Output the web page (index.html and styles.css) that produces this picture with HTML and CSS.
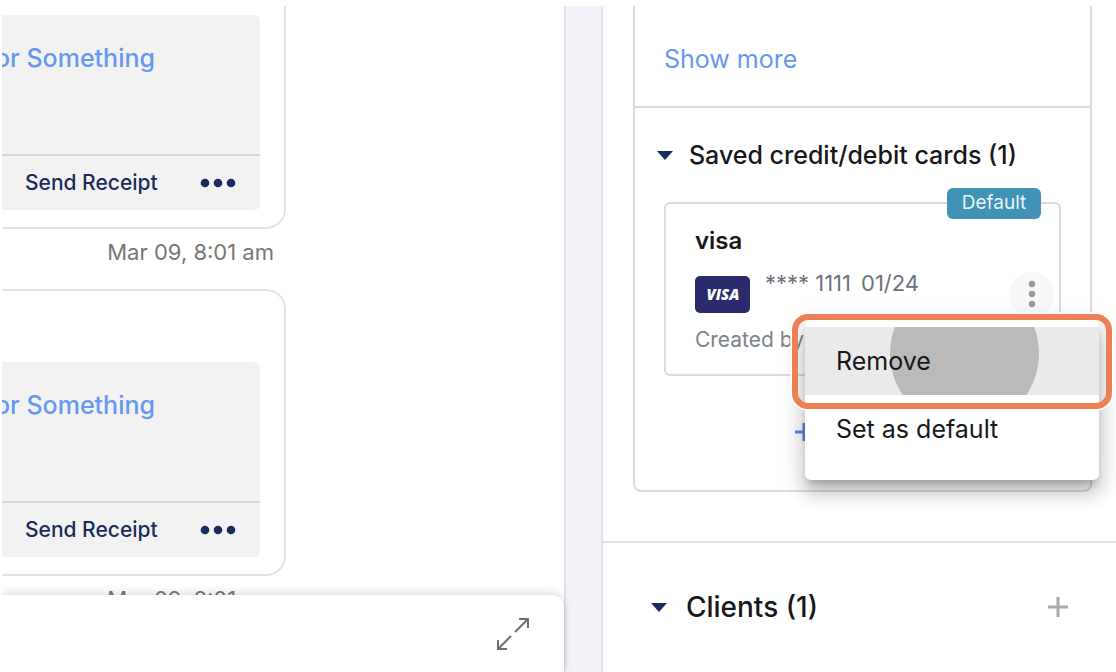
FILE: index.html
```html
<!DOCTYPE html>
<html lang="en">
<head>
  <meta charset="UTF-8" />
  <meta name="viewport" content="width=device-width, initial-scale=1.0" />
  <title>Client payments</title>
  <link rel="stylesheet" href="styles.css">
</head>
<body>

  <div class="page">
    <main class="conversation">
      <div class="messages">
        <article class="message">
          <div class="bubble">
            <div class="invoice">
              <div class="invoice-body">
                <a class="invoice-title" href="#">or Something</a>
              </div>
              <div class="invoice-footer">
                <button class="receipt">Send Receipt</button>
                <button class="dots" aria-label="More actions">
                  <svg width="36" height="10" viewBox="0 0 36 10"><circle cx="5" cy="5" r="4.3"/><circle cx="18" cy="5" r="4.3"/><circle cx="31" cy="5" r="4.3"/></svg>
                </button>
              </div>
            </div>
          </div>
          <time class="stamp">Mar 09, 8:01 am</time>
        </article>

        <article class="message">
          <div class="bubble">
            <div class="invoice">
              <div class="invoice-body">
                <a class="invoice-title" href="#">or Something</a>
              </div>
              <div class="invoice-footer">
                <button class="receipt">Send Receipt</button>
                <button class="dots" aria-label="More actions">
                  <svg width="36" height="10" viewBox="0 0 36 10"><circle cx="5" cy="5" r="4.3"/><circle cx="18" cy="5" r="4.3"/><circle cx="31" cy="5" r="4.3"/></svg>
                </button>
              </div>
            </div>
          </div>
          <time class="stamp">Mar 09, 8:01 am</time>
        </article>
      </div>

      <div class="composer">
        <button class="expand" aria-label="Expand">
          <svg width="34" height="34" viewBox="0 0 34 34"><path d="M19 15L32 2M23 2h9v9M15 19L2 32M2 23v9h9"/></svg>
        </button>
      </div>
    </main>

    <aside class="sidebar">
      <section class="details">
        <div class="panel">
          <div class="panel-more">
            <a class="show-more" href="#">Show more</a>
          </div>
          <div class="panel-cards">
            <h3 class="heading"><span class="caret"></span>Saved credit/debit cards (1)</h3>

            <div class="card">
              <span class="badge">Default</span>
              <h4 class="card-brand">visa</h4>
              <div class="card-row">
                <svg class="visa" width="55" height="37" viewBox="0 0 55 37" role="img" aria-label="Visa">
                  <rect width="55" height="37" rx="5"/>
                  <text x="28" y="24" text-anchor="middle">VISA</text>
                </svg>
                <span class="card-number">**** 1111</span>
                <span class="card-date">01/24</span>
                <button class="kebab" aria-label="Card options">
                  <svg width="8" height="28" viewBox="0 0 8 28"><circle cx="4" cy="4" r="3.2"/><circle cx="4" cy="14" r="3.2"/><circle cx="4" cy="24" r="3.2"/></svg>
                </button>
              </div>
              <p class="card-author">Created by</p>

              <div class="menu">
                <button class="menu-item active"><span class="ripple"></span><span class="menu-label">Remove</span></button>
                <button class="menu-item"><span class="menu-label">Set as default</span></button>
                <div class="highlight"></div>
              </div>
            </div>

            <button class="add-card" aria-label="Add card">
              <svg width="20" height="20" viewBox="0 0 20 20"><path d="M0 10h19M9 1v18"/></svg>
            </button>
          </div>
        </div>
      </section>

      <section class="clients">
        <h2 class="heading heading-large"><span class="caret"></span>Clients (1)</h2>
        <button class="add-client" aria-label="Add client">
          <svg width="22" height="22" viewBox="0 0 22 22"><path d="M1 11h20M11 1v20"/></svg>
        </button>
      </section>
    </aside>
  </div>

</body>
</html>
```

FILE: styles.css
```css
* {
  box-sizing: border-box;
}

body {
  margin: 0;
  background-color: #fff;
  color: #17181b;
  font-family: Inter, sans-serif;
  font-size: 25px;
  line-height: 30px;
}

h2, h3, h4, p {
  margin: 0;
}

a {
  color: #6698ef;
  text-decoration: none;
}

button {
  border: none;
  padding: 0;
  background: none;
  color: inherit;
  font: inherit;
  cursor: pointer;
}

svg {
  display: block;
}

.page {
  display: grid;
  grid-template-columns: 23fr 21fr;
  gap: 39px;
  height: calc(100vh - 6px);
  margin: 6px 0 0 2px;
  background-color: #f2f3f8;
  overflow: hidden;
}

/* Conversation */
.conversation {
  display: flex;
  flex-direction: column;
  min-width: 0;
  min-height: 0;
  background-color: #fff;
  box-shadow: 0 0 3px rgba(60, 65, 90, 0.35);
}

.messages {
  flex: 1;
  min-height: 0;
  overflow: hidden;
}

/* the list is scrolled part of the way past the first message */
.message:first-child {
  margin-top: -64px;
}

.message {
  width: 284px;
}

.bubble {
  padding: 71px 24px 17px 0;
  border: 2px solid #e3e3e3;
  border-left: none;
  border-radius: 0 20px 20px 0;
}

.invoice {
  background-color: #f2f2f2;
  border-radius: 0 6px 6px 0;
}

.invoice-body {
  display: flex;
  justify-content: flex-end;
  height: 139px;
  width: 153px;
  padding-top: 28px;
  overflow: hidden;
}

.invoice-title {
  font-weight: 500;
  white-space: nowrap;
}

.invoice-footer {
  display: flex;
  align-items: center;
  justify-content: space-between;
  height: 56px;
  padding: 0 24px 0 23px;
  border-top: 2px solid #d5d5d5;
  color: #1a2c5b;
}

.receipt {
  font-size: 21px;
  font-weight: 500;
}

.dots {
  fill: #1a2c5b;
}

.stamp {
  display: block;
  height: 60px;
  padding: 8px 12px 0 0;
  color: #777;
  font-size: 22px;
  text-align: right;
}

.composer {
  display: flex;
  justify-content: flex-end;
  align-items: center;
  position: relative;
  height: 77px;
  padding-right: 34px;
  background-color: #fff;
  border-radius: 0 12px 0 0;
  box-shadow: 0 -2px 8px rgba(0, 0, 0, 0.14);
}

.expand {
  fill: none;
  stroke: #707070;
  stroke-width: 2;
}

/* Sidebar */
.sidebar {
  min-width: 0;
  background-color: #fff;
  box-shadow: 0 0 3px rgba(60, 65, 90, 0.35);
}

.details {
  padding: 0 24px 49px 30px;
  border-bottom: 2px solid #e3e3e5;
}

.panel {
  border: 2px solid #dcdce0;
  border-top: none;
  border-radius: 0 0 8px 8px;
}

.panel-more {
  padding: 38px 29px 32px;
  border-bottom: 2px solid #dcdce0;
}

.show-more {
  display: block;
}

.panel-cards {
  padding: 32px 29px 48px;
}

.heading {
  display: flex;
  align-items: center;
  gap: 16px;
  margin-left: -7px;
  font-size: 25px;
  font-weight: 500;
}

.heading-large {
  margin-left: 0;
  gap: 19px;
  font-size: 28px;
}

.caret {
  border: 8px solid transparent;
  border-top: 9px solid #1a2c5b;
  border-bottom: none;
}

.card {
  position: relative;
  height: 174px;
  margin: 32px 0 46px;
  padding: 22px 5px 0 29px;
  border: 2px solid #dcdce0;
  border-radius: 6px;
}

.badge {
  position: absolute;
  top: -16px;
  right: 18px;
  width: 94px;
  height: 31px;
  background-color: #4192b4;
  border-radius: 6px;
  color: #e6f4fa;
  font-size: 19px;
  line-height: 30px;
  text-align: center;
}

.card-brand {
  font-size: 24px;
  font-weight: 600;
  line-height: 30px;
}

.card-row {
  display: flex;
  align-items: center;
  height: 46px;
  margin-top: 15px;
  color: #6d737d;
}

.visa {
  flex: none;
  margin-right: 15px;
  fill: #2b2a6c;
}

.visa text {
  fill: #fff;
  font: italic 800 15px "Open Sans", sans-serif;
}

.card-number,
.card-date {
  align-self: flex-start;
  margin-right: 10px;
  font-size: 22px;
  line-height: 24px;
}

.kebab {
  display: flex;
  align-items: center;
  justify-content: center;
  width: 45px;
  height: 45px;
  margin-left: auto;
  background-color: #f7f8f8;
  border-radius: 50%;
  fill: #9b9b9f;
}

.card-author {
  margin-top: 8px;
  color: #7d828b;
  font-size: 21px;
}

.menu {
  position: absolute;
  top: 115px;
  right: -40px;
  width: 294px;
  padding: 8px 0 17px;
  background-color: #fff;
  border-radius: 6px;
  box-shadow: 0 8px 9px -4px rgba(0, 0, 0, 0.2), 0 13px 17px 2px rgba(0, 0, 0, 0.14), 0 5px 23px 4px rgba(0, 0, 0, 0.12);
}

.menu-item {
  display: block;
  position: relative;
  width: 100%;
  height: 68px;
  padding-left: 31px;
  overflow: hidden;
  text-align: left;
}

.menu-item.active {
  background-color: #eaeaea;
}

.menu-label {
  position: relative;
}

.ripple {
  position: absolute;
  top: -48px;
  left: 85px;
  width: 149px;
  height: 149px;
  background-color: #bababa;
  border-radius: 50%;
}

.highlight {
  position: absolute;
  top: -5px;
  left: -13px;
  right: -13px;
  height: 95px;
  border: 6px solid #ed7f54;
  border-radius: 16px;
  box-shadow: 0 0 0 2px rgba(255, 255, 255, 0.8);
  pointer-events: none;
}

.add-card {
  display: block;
  margin-left: 131px;
  stroke: #4f86ea;
  stroke-width: 3;
}

.clients {
  display: flex;
  align-items: center;
  justify-content: space-between;
  padding: 49px 47px 49px 48px;
}

.add-client {
  stroke: #a9a9ab;
  stroke-width: 3;
}
```
